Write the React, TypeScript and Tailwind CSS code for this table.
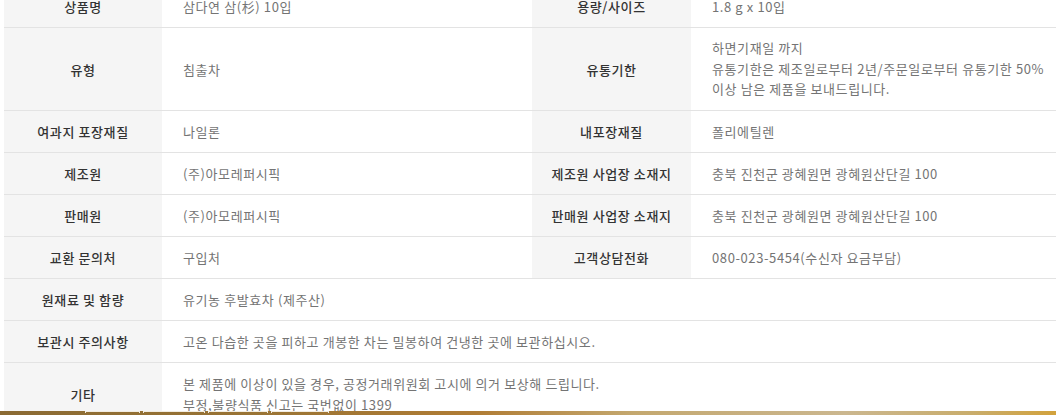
import React from "react";

type Row = {
  th: string;
  td: React.ReactNode;
  th2?: string;
  td2?: React.ReactNode;
};

const ROWS: Row[] = [
  { th: "상품명", td: "삼다연 삼(杉) 10입", th2: "용량/사이즈", td2: "1.8 g x 10입" },
  {
    th: "유형",
    td: "침출차",
    th2: "유통기한",
    td2: (
      <span className="block leading-[20.7px]">
        하면기재일 까지
        <br />
        유통기한은 제조일로부터 2년/주문일로부터 유통기한 50%
        <br />
        이상 남은 제품을 보내드립니다.
      </span>
    ),
  },
  { th: "여과지 포장재질", td: "나일론", th2: "내포장재질", td2: "폴리에틸렌" },
  { th: "제조원", td: "(주)아모레퍼시픽", th2: "제조원 사업장 소재지", td2: "충북 진천군 광혜원면 광혜원산단길 100" },
  { th: "판매원", td: "(주)아모레퍼시픽", th2: "판매원 사업장 소재지", td2: "충북 진천군 광혜원면 광혜원산단길 100" },
  { th: "교환 문의처", td: "구입처", th2: "고객상담전화", td2: "080-023-5454(수신자 요금부담)" },
  { th: "원재료 및 함량", td: "유기농 후발효차 (제주산)" },
  { th: "보관시 주의사항", td: "고온 다습한 곳을 피하고 개봉한 차는 밀봉하여 건냉한 곳에 보관하십시오." },
  {
    th: "기타",
    td: (
      <>
        본 제품에 이상이 있을 경우, 공정거래위원회 고시에 의거 보상해 드립니다.
        <br />
        부정,불량식품 신고는 국번없이 1399
      </>
    ),
  },
];

const thCls =
  "bg-[#f5f5f5] text-center font-medium text-[#333] py-[10px] px-2 align-middle";
const tdCls = "bg-white text-left text-[#747474] py-[10px] pl-[21px] pr-2 align-middle";

export default function App() {
  return (
    <div className="relative h-[415px] overflow-hidden bg-white font-['Noto_Sans_CJK_KR','Noto_Sans',sans-serif] text-[13px] leading-[21px] tracking-[0.6px]">
      <div className="pl-[4px] mt-[-14px]">
        <table className="w-[1052px] table-fixed border-collapse">
          <colgroup>
            <col className="w-[158px]" />
            <col className="w-[370px]" />
            <col className="w-[159px]" />
            <col />
          </colgroup>
          <tbody>
            {ROWS.map((r) => (
              <tr key={r.th} className="border-b border-[#e3e3e3]">
                <th className={thCls}>{r.th}</th>
                {r.th2 ? (
                  <>
                    <td className={tdCls}>{r.td}</td>
                    <th className={thCls}>{r.th2}</th>
                    <td className={tdCls}>{r.td2}</td>
                  </>
                ) : (
                  <td colSpan={3} className={tdCls}>
                    {r.td}
                  </td>
                )}
              </tr>
            ))}
          </tbody>
        </table>
      </div>

      {/* bottom bar peeking in */}
      <div className="absolute left-0 right-0 bottom-0 h-[4px] bg-[linear-gradient(90deg,#8a6a33_0%,#9a7434_25%,#b07c34_45%,#c4a86f_60%,#cbb78f_80%,#c9ad6c_92%,#d2a23c_100%)]">
        <div className="absolute top-0 left-[85px] flex gap-[3px]">
          <div className="h-[2px] w-[55px] border-t border-x border-[#f2ece0]" />
          <div className="h-[2px] w-[62px] border-t border-x border-[#f2ece0]" />
          <div className="h-[2px] w-[60px] border-t border-x border-[#f2ece0]" />
          <div className="h-[2px] w-[58px] border-t border-x border-[#f2ece0]" />
        </div>
      </div>
    </div>
  );
}
